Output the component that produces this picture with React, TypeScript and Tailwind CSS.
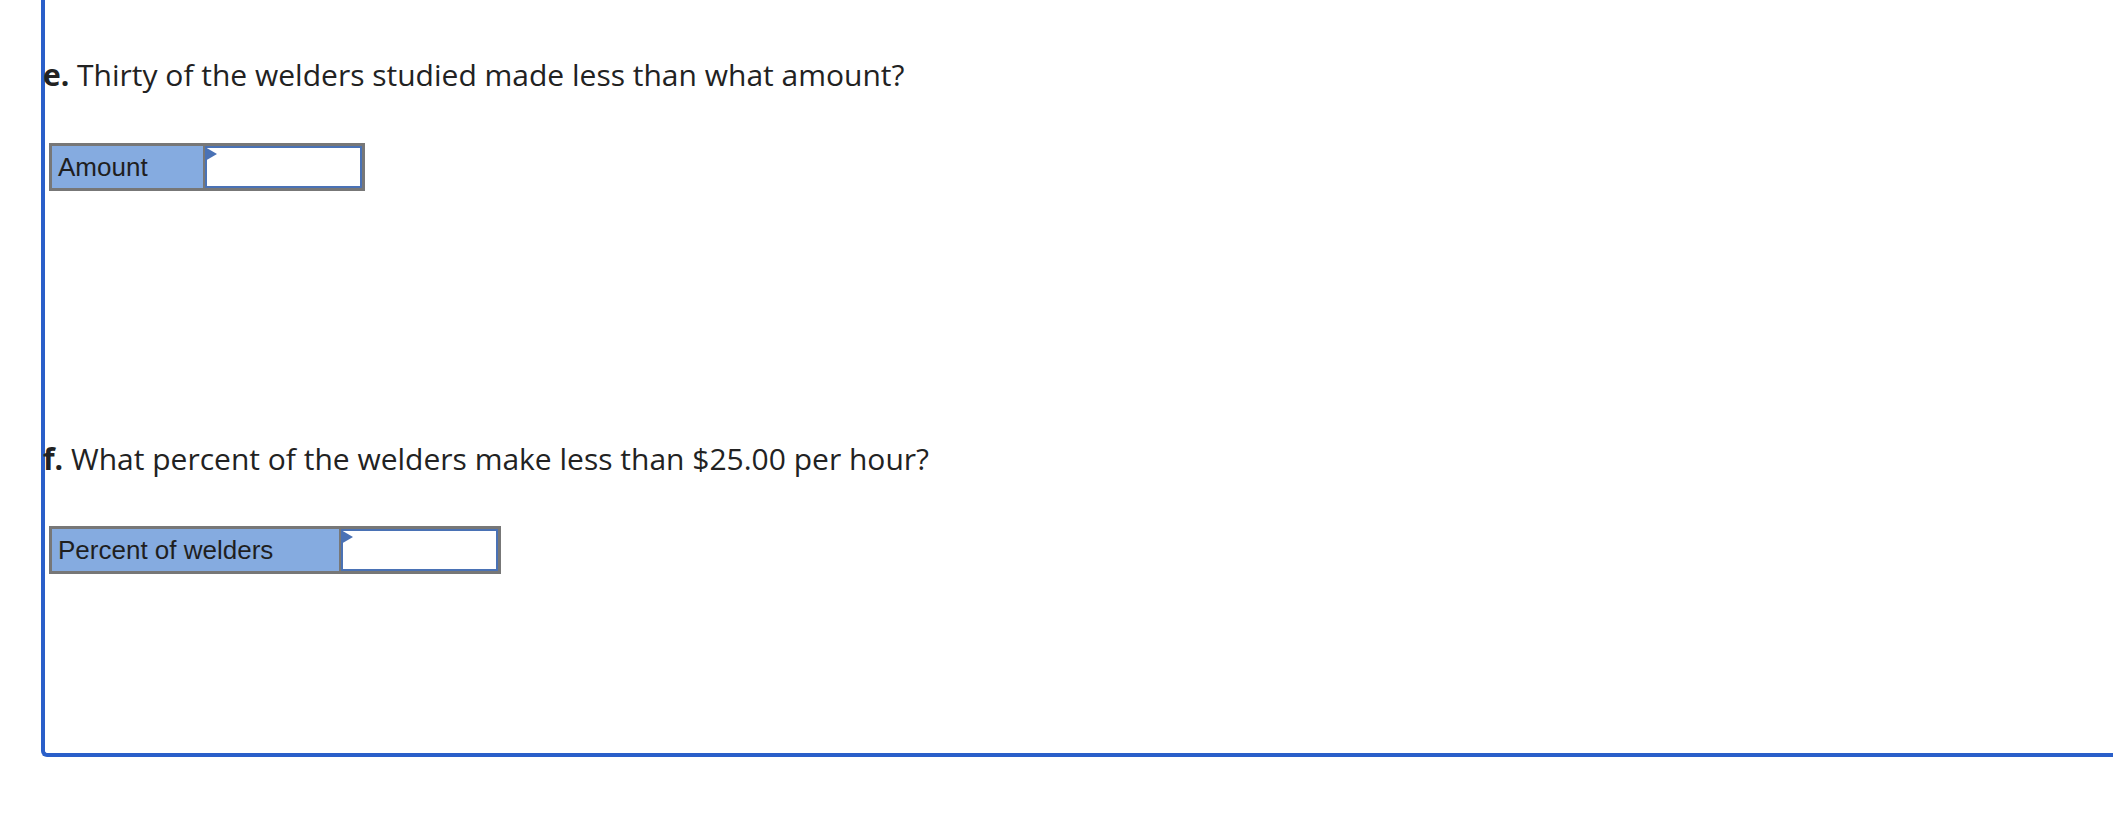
const AnswerRow = ({ label, labelWidth }: { label: string; labelWidth: string }) => {
  return (
    <div className="ml-[6px] flex h-[48px] w-fit border-[3px] border-[#777777]">
      <div
        className={`${labelWidth} flex items-center bg-[#85abe0] pl-[6px] text-[26px] text-[#1f1f1f]`}
        style={{ fontFamily: '"Liberation Sans", Arial, sans-serif' }}
      >
        {label}
      </div>
      <div className="relative border-l-2 border-[#777777]">
        <div className="h-full w-[157px] border-2 border-[#4a72b5] bg-white" />
        {/* little marker in the corner of the cell */}
        <svg className="absolute left-0 top-[1px]" width="12" height="14" viewBox="0 0 12 14">
          <polygon points="0,0 12,7 0,14" fill="#4a72b5" />
        </svg>
      </div>
    </div>
  );
};

export default function App() {
  return (
    <div
      className="h-[835px] w-full overflow-hidden bg-white pl-[41px] text-[#222222]"
      style={{ fontFamily: '"Open Sans", Lato, sans-serif' }}
    >
      <div className="h-[757px] rounded-bl-[6px] border-b-4 border-l-4 border-[#2a5fc9]">
        <div className="-ml-[2px] pt-[57px]">
          <p className="text-[30px] leading-[36px]">
            <span className="font-bold">e.</span> Thirty of the welders studied made less than what amount?
          </p>
          <div className="mt-[50px]">
            <AnswerRow label="Amount" labelWidth="w-[151px]" />
          </div>

          <p className="mt-[250px] text-[30px] leading-[36px]">
            <span className="font-bold">f.</span> What percent of the welders make less than $25.00 per hour?
          </p>
          <div className="mt-[49px]">
            <AnswerRow label="Percent of welders" labelWidth="w-[287px]" />
          </div>
        </div>
      </div>
    </div>
  );
}
